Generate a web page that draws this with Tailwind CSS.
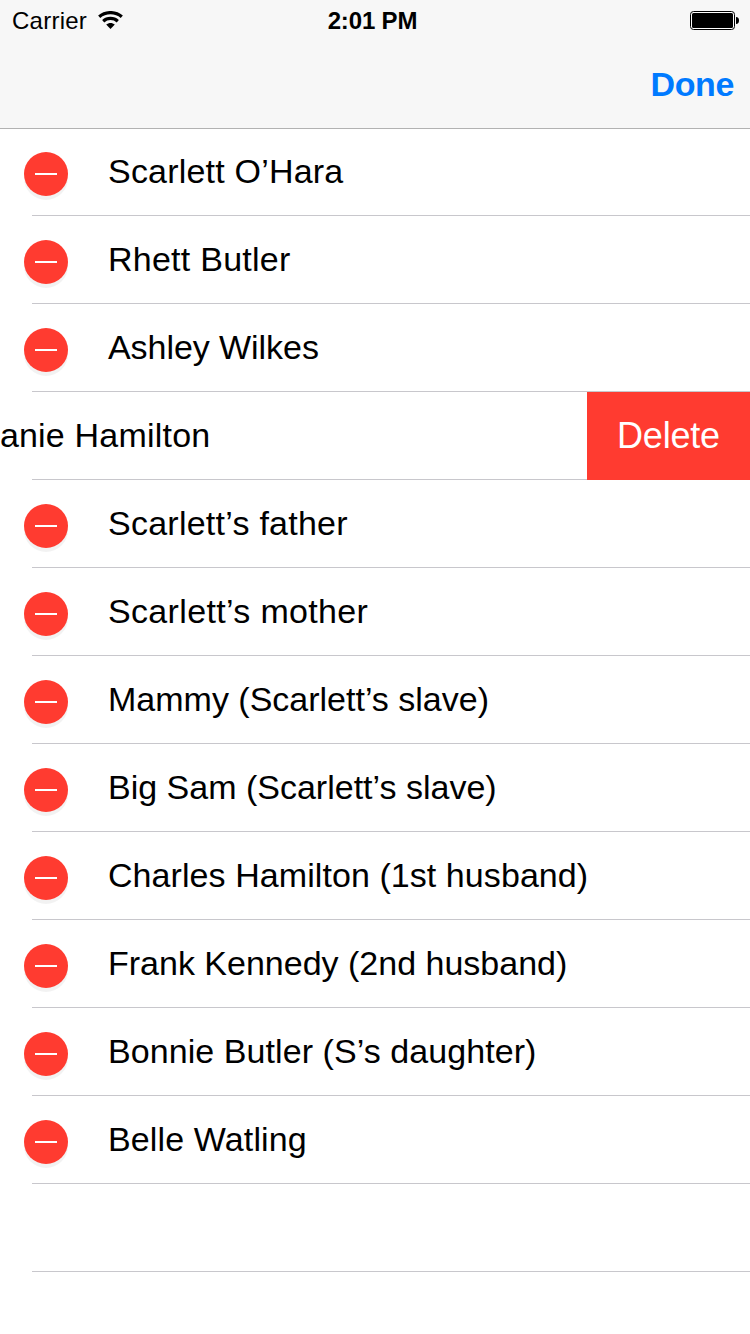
<!DOCTYPE html>
<html lang="en">
<head>
    <meta charset="UTF-8">
    <meta name="viewport" content="width=device-width, initial-scale=1.0">
    <title>Characters</title>
    <script src="https://cdn.jsdelivr.net/npm/@tailwindcss/browser@4"></script>
</head>
<body class="h-[1334px] w-[750px] overflow-hidden bg-white font-['Liberation_Sans',Arial,sans-serif] text-black">
    <header class="relative z-10 h-[129px] border-b border-[#b2b2b2] bg-[#f7f7f7]">
        <!-- Status bar -->
        <div class="grid h-10 grid-cols-3 items-center pl-3 pr-[11px]">
            <div class="flex items-center gap-[11px]">
                <span class="pt-0.5 text-[24px] leading-[38px] tracking-[0.25px]">Carrier</span>
                <svg class="h-[18px] w-[25px]" viewBox="0 0 25 18" fill="none">
                    <path d="M1.2 5.700C7.500 .2 17.500 .2 23.800 5.700" stroke="#000" stroke-width="3.200" />
                    <path d="M5.200 10.200C9.300 6.500 15.700 6.500 19.800 10.200" stroke="#000" stroke-width="3.200" />
                    <path d="M8.200 13.600C10.700 11.400 14.300 11.400 16.800 13.600L12.500 18Z" fill="#000" />
                </svg>
            </div>
            <span class="pr-1.5 pt-0.5 text-center text-[24px] font-bold leading-[38px] tracking-[-0.15px]">2:01 PM</span>
            <svg class="h-[19px] w-[49px] justify-self-end" viewBox="0 0 49 19">
                <rect x=".5" y=".5" width="44" height="18" rx="3" fill="#fff" stroke="#000" />
                <rect x="2" y="2" width="41" height="15" rx="1.500" fill="#000" />
                <path d="M46 6C48.200 6 49 7.500 49 9.500S48.200 13 46 13Z" fill="#000" />
            </svg>
        </div>
        <!-- Navigation bar -->
        <nav class="flex h-[88px] items-center justify-end pr-4">
            <button class="text-[34px] font-bold leading-[88px] tracking-[-0.4px] text-[#007aff]">Done</button>
        </nav>
    </header>
    <ul id="characters" class="-mt-px"></ul>
    <script>
        // spacing is the letter spacing of the name in px
        const characters = [
            { name: 'Scarlett O’Hara', spacing: 0.2 },
            { name: 'Rhett Butler', spacing: 0.25 },
            { name: 'Ashley Wilkes', spacing: -0.06 },
            { name: 'Melanie Hamilton', spacing: 0.2, deleting: true },
            { name: 'Scarlett’s father', spacing: 0.25 },
            { name: 'Scarlett’s mother', spacing: 0.34 },
            { name: 'Mammy (Scarlett’s slave)', spacing: 0 },
            { name: 'Big Sam (Scarlett’s slave)', spacing: 0 },
            { name: 'Charles Hamilton (1st husband)', spacing: 0.07 },
            { name: 'Frank Kennedy (2nd husband)', spacing: 0 },
            { name: 'Bonnie Butler (S’s daughter)', spacing: 0.07 },
            { name: 'Belle Watling', spacing: 0.13 },
        ];

        // Normal row in edit mode
        function editRow(character) {
            return `
                <li class="flex h-22 pl-6">
                    <div class="flex w-2 items-center pt-1">
                        <span class="relative z-10 flex size-11 shrink-0 items-center justify-center rounded-full bg-[#ff3b30] shadow-[0_4px_0_rgba(0,0,0,0.05)]">
                            <span class="h-0.5 w-[22px] bg-white"></span>
                        </span>
                    </div>
                    <div class="flex-1 border-b border-[#c8c7cc] pl-[76px]">
                        <span class="whitespace-nowrap text-[34px] leading-[87px]" style="letter-spacing: ${character.spacing}px">${character.name}</span>
                    </div>
                </li>`;
        }

        // Row slid to the left with its delete button showing
        function deleteRow(character) {
            return `
                <li class="flex h-22 overflow-hidden">
                    <div class="w-8 shrink-0">
                        <span class="-ml-[55.5px] whitespace-nowrap text-[34px] leading-[87px]" style="letter-spacing: ${character.spacing}px">${character.name}</span>
                    </div>
                    <div class="flex-1 border-b border-[#c8c7cc]"></div>
                    <button class="w-[163px] bg-[#ff3b30] text-[36px] leading-[88px] tracking-[-0.2px] text-white">Delete</button>
                </li>`;
        }

        const emptyRow = `
                <li class="flex h-22 pl-8">
                    <div class="flex-1 border-b border-[#c8c7cc]"></div>
                </li>`;

        document.getElementById('characters').innerHTML =
            characters.map(c => c.deleting ? deleteRow(c) : editRow(c)).join('') + emptyRow;
    </script>
</body>
</html>
